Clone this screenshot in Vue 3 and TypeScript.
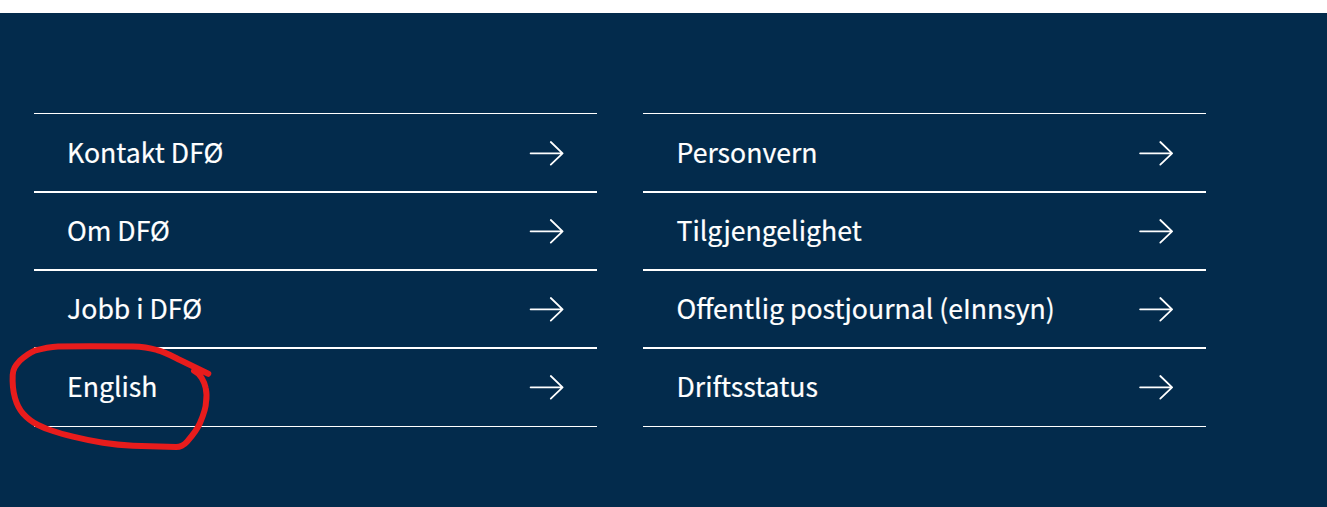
<script setup lang="ts">
const columns: string[][] = [
  ['Kontakt DFØ', 'Om DFØ', 'Jobb i DFØ', 'English'],
  ['Personvern', 'Tilgjengelighet', 'Offentlig postjournal (eInnsyn)', 'Driftsstatus'],
]
</script>

<template>
  <footer class="footer">
    <nav class="columns">
      <ul v-for="(column, index) in columns" :key="index" class="links">
        <li v-for="label in column" :key="label" class="item">
          <a class="link">
            <span class="label">{{ label }}</span>
            <svg class="arrow" width="36" height="26" viewBox="0 0 36 26" aria-hidden="true">
              <path d="M1.600 13.3H33.600M21.800 2L33.600 13.3L21.800 24.6" />
            </svg>
          </a>
        </li>
      </ul>
    </nav>
    <svg class="marker" width="220" height="120" viewBox="0 335 220 120" aria-hidden="true">
      <path
        d="M208.3 373.8L180 360C172 356 165 352 157 350C149 347.500 142 346.500 133 346.400L90 346.300L58 346.400C50 346.700 42 348.500 34.500 350.700C29 353 24 357 20 360.500C15 366 13 369 12.700 375C12.300 383 13 391 15 398C17 405 19 409 23 413.500C27 418 32 422 38 425C43 427.500 48 429.500 53 431C60 433.500 66 435 73 436.700C83 439.200 93 441.200 103 442.700C113 444.200 123 445.200 133 445.700L176 447C181 447 184 445 187 441.700C192 436 197 430 200 423C203 416 206 409 206 402C207 397 206.500 392 205.700 388C205 384 203.500 381 201.700 378C199.500 374.500 197 372 194 370.700"
      />
    </svg>
  </footer>
</template>

<style>
body {
  margin: 0;
  background: #fff;
}
</style>

<style scoped>
.footer {
  position: relative;
  box-sizing: border-box;
  height: 494px;
  margin-top: 13px;
  padding: 100px 121px 0 34px;
  background: #032b4c;
  color: #fff;
  overflow: hidden;
  font-family: "Noto Sans CJK JP", "Noto Sans", sans-serif;
}

.columns {
  display: grid;
  grid-template-columns: 563px 563px;
  column-gap: 46px;
}

.links {
  margin: 0;
  padding: 0;
  list-style: none;
}

.item {
  box-sizing: border-box;
  height: 78px;
  border-top: 1px solid #fff;
  border-bottom: 1px solid #fff;
}

.item:first-child,
.item:last-child {
  height: 79px;
}

.link {
  display: flex;
  align-items: center;
  justify-content: space-between;
  height: 76px;
  padding: 0 32px 0 33px;
}

.item:first-child .link {
  padding-top: 1px;
}

.label {
  padding-bottom: 2px;
  font-size: 26.64px;
  line-height: 40px;
  white-space: nowrap;
  -webkit-text-stroke: 0.2px #fff;
}

.arrow {
  fill: none;
  stroke: #fff;
  stroke-width: 1.8;
  stroke-linecap: round;
  stroke-linejoin: round;
}

.links:last-child .label,
.links:last-child .arrow {
  transform: translateX(0.5px);
}

.marker {
  position: absolute;
  left: 0;
  top: 322px;
  fill: none;
  stroke: #e81c1c;
  stroke-width: 6;
  stroke-linecap: round;
  stroke-linejoin: round;
}
</style>
